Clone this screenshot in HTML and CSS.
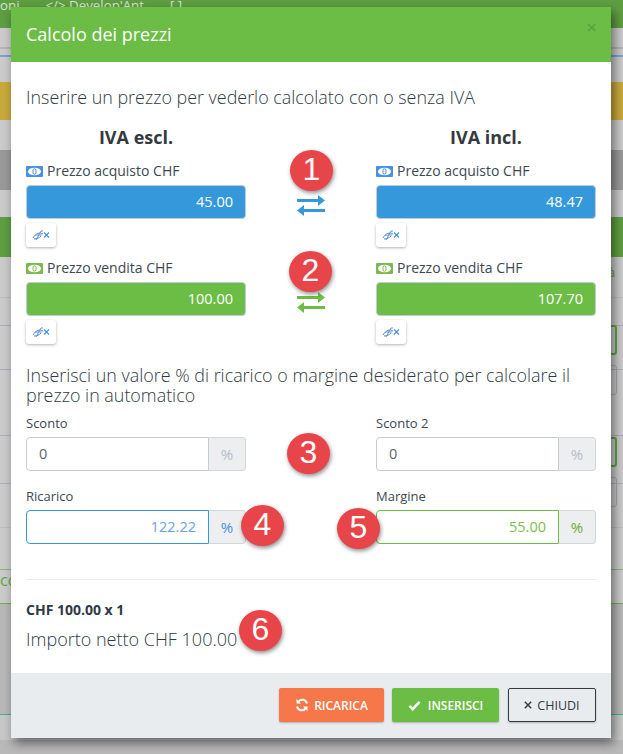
FILE: index.html
```html
<!DOCTYPE html>
<html lang="it">
<head>
    <meta charset="utf-8">
    <title>Calcolo dei prezzi</title>
    <link rel="stylesheet" href="styles.css">
</head>
<body>

    <svg class="sprites" width="0" height="0" xmlns="http://www.w3.org/2000/svg">
        <symbol id="bill" viewBox="0 0 17 11">
            <rect x="0" y="0" width="17" height="11" rx="1" fill="currentColor"/>
            <ellipse cx="8.5" cy="5.5" rx="6.5" ry="3.8" fill="#fff"/>
            <rect x="7" y="2.8" width="3" height="5.4" rx="1.4" fill="none" stroke="currentColor" stroke-width="1"/>
        </symbol>
        <symbol id="fx" viewBox="0 0 18 12">
            <path d="M1 9c3-5 7-6 10-4" fill="none" stroke="currentColor" stroke-width="1"/>
            <path d="M2 10c3 0 5-1 7-3" fill="none" stroke="currentColor" stroke-width="1"/>
            <path d="M4 11 9 2h2M3 6h7" fill="none" stroke="#6f8fd0" stroke-width="1"/>
            <path d="M12 3.500l5 5M17 3.500l-5 5" fill="none" stroke="currentColor" stroke-width="1.100"/>
        </symbol>
        <symbol id="swap" viewBox="0 0 28 21">
            <path d="M0 5.500h22" stroke="currentColor" stroke-width="3"/>
            <path d="M21 0l7 5.500-7 5.500z" fill="currentColor"/>
            <path d="M6 15.500h22" stroke="currentColor" stroke-width="3"/>
            <path d="M7 10l-7 5.500 7 5.500z" fill="currentColor"/>
        </symbol>
    </svg>

    <!-- pagina dietro al modal -->
    <div class="page">
        <div class="band band--nav"><span>oni</span><span>&lt;/&gt; Develop'Ant</span><span>[ ]</span></div>
        <div class="band band--light band--ruled"></div>
        <div class="band band--yellow"></div>
        <div class="band band--light band--h30"></div>
        <div class="band band--gray"></div>
        <div class="band band--light band--h27"></div>
        <div class="band band--green"></div>
        <div class="band band--rows">
            <span class="side-text">à</span>
            <span class="side-box side-box--green"></span>
            <span class="side-box"></span>
            <span class="side-box side-box--green side-box--low"></span>
            <span class="side-box"></span>
        </div>
        <div class="band band--co"><span>co</span></div>
        <div class="band band--dark"></div>
        <div class="band band--pale"></div>
    </div>

    <div class="modal">
        <header class="modal__head">
            <h4>Calcolo dei prezzi</h4>
            <span class="modal__close">×</span>
        </header>

        <div class="modal__body">
            <p class="lead">Inserire un prezzo per vederlo calcolato con o senza IVA</p>

            <div class="prices">
                <div class="col">
                    <h5>IVA escl.</h5>
                    <label><svg class="bill bill--blue"><use href="#bill"/></svg> Prezzo acquisto CHF</label>
                    <div class="price price--blue">45.00</div>
                    <button class="fx"><svg><use href="#fx"/></svg></button>
                    <label class="second"><svg class="bill bill--green"><use href="#bill"/></svg> Prezzo vendita CHF</label>
                    <div class="price price--green">100.00</div>
                    <button class="fx"><svg><use href="#fx"/></svg></button>
                </div>
                <div class="swaps">
                    <svg class="swap swap--blue"><use href="#swap"/></svg>
                    <svg class="swap swap--green"><use href="#swap"/></svg>
                </div>
                <div class="col">
                    <h5>IVA incl.</h5>
                    <label><svg class="bill bill--blue"><use href="#bill"/></svg> Prezzo acquisto CHF</label>
                    <div class="price price--blue">48.47</div>
                    <button class="fx"><svg><use href="#fx"/></svg></button>
                    <label class="second"><svg class="bill bill--green"><use href="#bill"/></svg> Prezzo vendita CHF</label>
                    <div class="price price--green">107.70</div>
                    <button class="fx"><svg><use href="#fx"/></svg></button>
                </div>
            </div>

            <p class="lead lead--two">Inserisci un valore % di ricarico o margine desiderato per calcolare il prezzo in automatico</p>

            <div class="rates">
                <div class="rate">
                    <label>Sconto</label>
                    <div class="group">
                        <div class="field">0</div>
                        <div class="addon">%</div>
                    </div>
                </div>
                <div class="rate">
                    <label>Sconto 2</label>
                    <div class="group">
                        <div class="field">0</div>
                        <div class="addon">%</div>
                    </div>
                </div>
                <div class="rate">
                    <label>Ricarico</label>
                    <div class="group group--blue">
                        <div class="field field--end">122.22</div>
                        <div class="addon">%</div>
                    </div>
                </div>
                <div class="rate">
                    <label>Margine</label>
                    <div class="group group--green">
                        <div class="field field--end">55.00</div>
                        <div class="addon">%</div>
                    </div>
                </div>
            </div>

            <hr>
            <div class="total">CHF 100.00 x 1</div>
            <div class="net">Importo netto CHF 100.00</div>
        </div>

        <footer class="modal__foot">
            <button class="btn btn--orange">
                <svg viewBox="0 0 14 14" width="14" height="14"><path d="M12 5.500A5 5 0 0 0 3 4M2 8.500A5 5 0 0 0 11 10" fill="none" stroke="#fff" stroke-width="2"/><path d="M1.500 1v4.500H6zM12.500 13V8.500H8z" fill="#fff"/></svg>
                RICARICA
            </button>
            <button class="btn btn--green">
                <svg viewBox="0 0 14 12" width="13" height="11"><path d="M1.500 6.500l3.500 3.500 7.500-8" fill="none" stroke="#fff" stroke-width="2.600"/></svg>
                INSERISCI
            </button>
            <button class="btn btn--outline">
                <svg viewBox="0 0 10 10" width="8" height="8"><path d="M1 1l8 8M9 1l-8 8" fill="none" stroke="#343a40" stroke-width="1.800"/></svg>
                CHIUDI
            </button>
        </footer>

        <span class="pin pin--1">1</span>
        <span class="pin pin--2">2</span>
        <span class="pin pin--3">3</span>
        <span class="pin pin--4">4</span>
        <span class="pin pin--5">5</span>
        <span class="pin pin--6">6</span>
    </div>

</body>
</html>
```

FILE: styles.css
```css
* {
    box-sizing: border-box;
    margin: 0;
    padding: 0;
}
:root {
    --blue: #3498db;
    --green: #6cbd45;
    --text: #3d4852;
    --line: #c4cbd6;
    --rule: #a9aec0;
}
html, body {
    height: 100%;
    overflow: hidden;
}
body {
    background: #b9b9b9;
    color: var(--text);
    font: 13px/1.4 "Open Sans", sans-serif;
}
.sprites {
    display: block;
    height: 0;
}

/* Page behind the modal */
.page {
    height: 754px;
    display: flex;
    flex-direction: column;
}
.band {
    flex: none;
}
.band--nav {
    height: 28px;
    background: #5f9e42;
    color: #d6e6cd;
    font-size: 13.3px;
    line-height: 10px;
    overflow: hidden;
    display: flex;
    gap: 26px;
    white-space: nowrap;
}
.band--light {
    background: #cbcbcb;
}
.band--ruled {
    height: 54px;
    background:
        linear-gradient(#b4b4b4, #b4b4b4) 0 19px / 100% 2px no-repeat,
        linear-gradient(#cbcbcb 27px, #74a6cf 27px, #74a6cf 29px, #cbcbcb 29px);
}
.band--yellow {
    height: 38px;
    background: #c8aa3c;
}
.band--h30 {
    height: 30px;
}
.band--gray {
    height: 40px;
    background: #9a9a9a;
}
.band--h27 {
    height: 27px;
}
.band--green {
    height: 40px;
    background: #5f9e42;
}
.band--rows {
    height: 313px;
    background-color: #cbcbcb;
    background-image:
        linear-gradient(var(--rule), var(--rule)),
        linear-gradient(var(--rule), var(--rule)),
        linear-gradient(var(--rule), var(--rule)),
        linear-gradient(var(--rule), var(--rule)),
        linear-gradient(#bdbdbd, #bdbdbd),
        linear-gradient(#bdbdbd, #bdbdbd);
    background-repeat: no-repeat;
    background-size: 100% 1px;
    background-position: 0 68px, 0 112px, 0 178px, 0 226px, 0 40px, 0 270px;
    display: flex;
    flex-direction: column;
    align-items: flex-end;
}
.side-text {
    color: #5f9e42;
    font-size: 13px;
    line-height: 18px;
    padding-right: 8px;
    height: 62px;
    margin-top: 6px;
}
.side-box {
    width: 30px;
    height: 30px;
    margin-right: 6px;
    margin-bottom: 10px;
    border: 1px solid #a3aab5;
    border-radius: 3px;
}
.side-box--green {
    border: 2px solid #5fa642;
}
.side-box--low {
    margin-top: 32px;
}
.band--co {
    height: 35px;
    background: #cbcbcb;
    color: #5fa642;
    font-size: 16px;
    line-height: 20px;
    border-top: 1px solid #8bb874;
    border-bottom: 1px solid #6fae50;
    margin-top: -1px;
}
.band--dark {
    height: 111px;
    background: #b8b8b8;
}
.band--pale {
    height: 26px;
    background: #c8c8c8;
    border-top: 1px solid #3fb58a;
    margin-top: -1px;
}

/* Modal */
.modal {
    position: absolute;
    left: 11px;
    top: 7px;
    width: 600px;
    height: 731px;
    background: #fff;
    display: flex;
    flex-direction: column;
    box-shadow: 3px 5px 10px rgba(0, 0, 0, .5);
}
.modal__head {
    height: 55px;
    flex: none;
    background: var(--green);
    color: #fff;
    padding: 0 15px;
    display: flex;
    align-items: center;
    justify-content: space-between;
}
.modal__head h4 {
    font-size: 18px;
    font-weight: 400;
}
.modal__close {
    color: #5a9c3c;
    font-size: 19px;
    line-height: 1;
    margin-top: -15px;
    margin-right: -1px;
}
.modal__body {
    flex: 1;
    padding: 25px 15px 0;
}
.lead {
    font-size: 17.9px;
    font-weight: 300;
    line-height: 20px;
    color: #2f3a45;
}
.lead--two {
    margin-top: 21px;
}

.prices {
    display: grid;
    grid-template-columns: 220px 130px 220px;
    margin-top: 19px;
}
.col h5 {
    font-size: 18px;
    font-weight: 700;
    line-height: 22px;
    text-align: center;
    color: #343a40;
    margin-bottom: 14px;
}
.col label {
    display: flex;
    align-items: center;
    gap: 4px;
    height: 18px;
    margin-bottom: 5px;
    font-size: 14px;
    color: #3d4852;
}
.col label.second {
    margin-top: 12px;
}
.bill {
    width: 17px;
    height: 11px;
}
.bill--blue { color: #4a90e2; }
.bill--green { color: #7cb84f; }
.price {
    height: 34px;
    border: 1px solid var(--line);
    border-radius: 4px;
    color: #fff;
    font-size: 14.5px;
    line-height: 32px;
    text-align: right;
    padding-right: 12px;
}
.price--blue { background: var(--blue); }
.price--green { background: var(--green); }
.fx {
    display: flex;
    align-items: center;
    justify-content: center;
    width: 30px;
    height: 24px;
    margin-top: 4px;
    border: 0;
    border-radius: 3px;
    background: #fff;
    color: #3f8fe0;
    box-shadow: 0 1px 3px rgba(0, 0, 0, .3);
}
.fx svg {
    width: 18px;
    height: 12px;
}
.swaps {
    display: flex;
    flex-direction: column;
    align-items: center;
    padding-top: 69px;
    gap: 76px;
}
.swap {
    width: 28px;
    height: 21px;
    flex: none;
}
.swap--blue { color: var(--blue); }
.swap--green { color: var(--green); }

.rates {
    display: grid;
    grid-template-columns: 220px 220px;
    justify-content: space-between;
    row-gap: 16px;
    margin-top: 9px;
}
.rate label {
    display: block;
    line-height: 18px;
    margin-bottom: 5px;
}
.group {
    display: flex;
    height: 34px;
}
.field {
    flex: 1;
    border: 1px solid var(--line);
    border-radius: 4px 0 0 4px;
    background: #fff;
    font-size: 14.5px;
    line-height: 32px;
    padding: 0 12px;
    color: #5d6670;
}
.field--end {
    text-align: right;
}
.addon {
    width: 37px;
    flex: none;
    border: 1px solid #d3d6da;
    border-left: 0;
    border-radius: 0 4px 4px 0;
    background: #eceeef;
    color: #b6bec9;
    font-size: 15px;
    line-height: 32px;
    text-align: center;
}
.group--blue .field {
    border-color: var(--blue);
    color: #6fa3e0;
}
.group--blue .addon { color: #4a90e2; }
.group--green .field {
    border-color: var(--green);
    color: #7cbd4f;
}
.group--green .addon { color: #6cad3a; }

.modal__body hr {
    border: 0;
    border-top: 1px solid #e9ecef;
    margin-top: 35px;
}
.total {
    margin-top: 21px;
    font-size: 14px;
    font-weight: 700;
    line-height: 18px;
    color: #2f3a45;
}
.net {
    margin-top: 9px;
    font-size: 18px;
    font-weight: 300;
    line-height: 22px;
    color: #2f3a45;
}

.modal__foot {
    height: 65px;
    flex: none;
    background: #e9ecef;
    display: flex;
    justify-content: flex-end;
    align-items: flex-start;
    gap: 8px;
    padding: 15px 15px 0;
}
.btn {
    height: 34px;
    display: flex;
    align-items: center;
    justify-content: center;
    gap: 5px;
    border: 0;
    border-radius: 2px;
    font: 600 12px "Open Sans", sans-serif;
    color: #fff;
    box-shadow: 0 1px 2px rgba(0, 0, 0, .25);
}
.btn--orange {
    width: 105px;
    background: #f6774a;
}
.btn--green {
    width: 107px;
    gap: 7px;
    background: var(--green);
}
.btn--outline {
    width: 88px;
    margin-left: 1px;
    background: transparent;
    border: 1px solid #343a40;
    color: #343a40;
    font-weight: 400;
    font-size: 12.5px;
}

/* Numbered callouts over the form */
.pin {
    position: absolute;
    width: 43px;
    height: 41px;
    border-radius: 50%;
    background: #e8454a;
    color: #fff;
    font: 32px/38px "Liberation Sans", sans-serif;
    text-align: center;
    box-shadow: 1px 2px 4px rgba(0, 0, 0, .45);
}
.pin--1 { left: 279px; top: 143px; }
.pin--2 { left: 278px; top: 244px; }
.pin--3 { left: 276px; top: 426px; }
.pin--4 { left: 230px; top: 498px; }
.pin--5 { left: 326px; top: 501px; }
.pin--6 { left: 228px; top: 603px; }
```
